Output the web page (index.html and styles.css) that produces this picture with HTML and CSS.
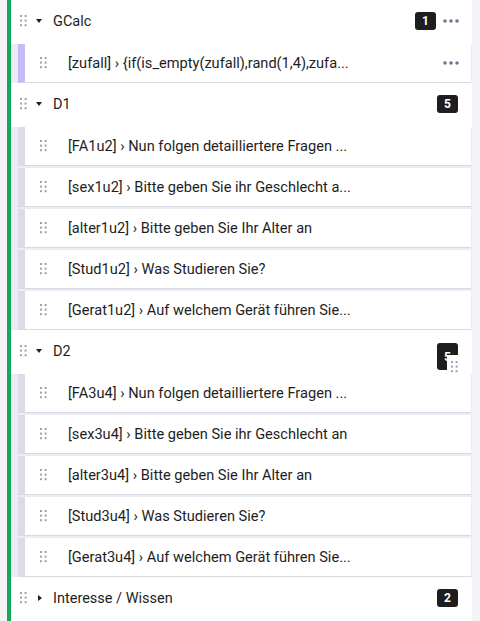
FILE: index.html
```html
<!DOCTYPE html>
<html lang="de">
<head>
<meta charset="utf-8">
<title>Fragenstruktur</title>
<link rel="stylesheet" href="styles.css">
</head>
<body>
<div class="tree">

  <div class="group">
    <div class="group-header">
      <span class="handle"><svg width="7" height="12" viewBox="0 0 7 12"><rect x="0" y="0" width="2" height="2"/><rect x="4.6" y="0" width="2" height="2"/><rect x="0" y="4.6" width="2" height="2"/><rect x="4.6" y="4.6" width="2" height="2"/><rect x="0" y="9.2" width="2" height="2"/><rect x="4.6" y="9.2" width="2" height="2"/></svg></span>
      <span class="caret"><span class="tri-down"></span></span>
      <span class="group-title">GCalc</span>
      <span class="badge">1</span>
      <span class="more"><svg width="16" height="4" viewBox="0 0 16 4"><circle cx="2" cy="2" r="1.8"/><circle cx="8" cy="2" r="1.8"/><circle cx="14" cy="2" r="1.8"/></svg></span>
    </div>
    <div class="group-body">
      <div class="question equation">
        <span class="handle"><svg width="7" height="12" viewBox="0 0 7 12"><rect x="0" y="0" width="2" height="2"/><rect x="4.6" y="0" width="2" height="2"/><rect x="0" y="4.6" width="2" height="2"/><rect x="4.6" y="4.6" width="2" height="2"/><rect x="0" y="9.2" width="2" height="2"/><rect x="4.6" y="9.2" width="2" height="2"/></svg></span>
        <span class="q-text">[zufall] › {if(is_empty(zufall),rand(1,4),zufa...</span>
        <span class="more"><svg width="16" height="4" viewBox="0 0 16 4"><circle cx="2" cy="2" r="1.8"/><circle cx="8" cy="2" r="1.8"/><circle cx="14" cy="2" r="1.8"/></svg></span>
      </div>
    </div>
  </div>

  <div class="group">
    <div class="group-header">
      <span class="handle"><svg width="7" height="12" viewBox="0 0 7 12"><rect x="0" y="0" width="2" height="2"/><rect x="4.6" y="0" width="2" height="2"/><rect x="0" y="4.6" width="2" height="2"/><rect x="4.6" y="4.6" width="2" height="2"/><rect x="0" y="9.2" width="2" height="2"/><rect x="4.6" y="9.2" width="2" height="2"/></svg></span>
      <span class="caret"><span class="tri-down"></span></span>
      <span class="group-title">D1</span>
      <span class="badge">5</span>
    </div>
    <div class="group-body">
      <div class="question">
        <span class="handle"><svg width="7" height="12" viewBox="0 0 7 12"><rect x="0" y="0" width="2" height="2"/><rect x="4.6" y="0" width="2" height="2"/><rect x="0" y="4.6" width="2" height="2"/><rect x="4.6" y="4.6" width="2" height="2"/><rect x="0" y="9.2" width="2" height="2"/><rect x="4.6" y="9.2" width="2" height="2"/></svg></span>
        <span class="q-text">[FA1u2] › Nun folgen detailliertere Fragen ...</span>
      </div>
      <div class="question">
        <span class="handle"><svg width="7" height="12" viewBox="0 0 7 12"><rect x="0" y="0" width="2" height="2"/><rect x="4.6" y="0" width="2" height="2"/><rect x="0" y="4.6" width="2" height="2"/><rect x="4.6" y="4.6" width="2" height="2"/><rect x="0" y="9.2" width="2" height="2"/><rect x="4.6" y="9.2" width="2" height="2"/></svg></span>
        <span class="q-text">[sex1u2] › Bitte geben Sie ihr Geschlecht a...</span>
      </div>
      <div class="question">
        <span class="handle"><svg width="7" height="12" viewBox="0 0 7 12"><rect x="0" y="0" width="2" height="2"/><rect x="4.6" y="0" width="2" height="2"/><rect x="0" y="4.6" width="2" height="2"/><rect x="4.6" y="4.6" width="2" height="2"/><rect x="0" y="9.2" width="2" height="2"/><rect x="4.6" y="9.2" width="2" height="2"/></svg></span>
        <span class="q-text">[alter1u2] › Bitte geben Sie Ihr Alter an</span>
      </div>
      <div class="question">
        <span class="handle"><svg width="7" height="12" viewBox="0 0 7 12"><rect x="0" y="0" width="2" height="2"/><rect x="4.6" y="0" width="2" height="2"/><rect x="0" y="4.6" width="2" height="2"/><rect x="4.6" y="4.6" width="2" height="2"/><rect x="0" y="9.2" width="2" height="2"/><rect x="4.6" y="9.2" width="2" height="2"/></svg></span>
        <span class="q-text">[Stud1u2] › Was Studieren Sie?</span>
      </div>
      <div class="question">
        <span class="handle"><svg width="7" height="12" viewBox="0 0 7 12"><rect x="0" y="0" width="2" height="2"/><rect x="4.6" y="0" width="2" height="2"/><rect x="0" y="4.6" width="2" height="2"/><rect x="4.6" y="4.6" width="2" height="2"/><rect x="0" y="9.2" width="2" height="2"/><rect x="4.6" y="9.2" width="2" height="2"/></svg></span>
        <span class="q-text">[Gerat1u2] › Auf welchem Gerät führen Sie...</span>
      </div>
    </div>
  </div>

  <div class="group">
    <div class="group-header">
      <span class="handle"><svg width="7" height="12" viewBox="0 0 7 12"><rect x="0" y="0" width="2" height="2"/><rect x="4.6" y="0" width="2" height="2"/><rect x="0" y="4.6" width="2" height="2"/><rect x="4.6" y="4.6" width="2" height="2"/><rect x="0" y="9.2" width="2" height="2"/><rect x="4.6" y="9.2" width="2" height="2"/></svg></span>
      <span class="caret"><span class="tri-down"></span></span>
      <span class="group-title">D2</span>
      <span class="badge badge-tall">5</span>
      <span class="drag-ghost"><span class="handle"><svg width="7" height="12" viewBox="0 0 7 12"><rect x="0" y="0" width="2" height="2"/><rect x="4.6" y="0" width="2" height="2"/><rect x="0" y="4.6" width="2" height="2"/><rect x="4.6" y="4.6" width="2" height="2"/><rect x="0" y="9.2" width="2" height="2"/><rect x="4.6" y="9.2" width="2" height="2"/></svg></span></span>
    </div>
    <div class="group-body">
      <div class="question">
        <span class="handle"><svg width="7" height="12" viewBox="0 0 7 12"><rect x="0" y="0" width="2" height="2"/><rect x="4.6" y="0" width="2" height="2"/><rect x="0" y="4.6" width="2" height="2"/><rect x="4.6" y="4.6" width="2" height="2"/><rect x="0" y="9.2" width="2" height="2"/><rect x="4.6" y="9.2" width="2" height="2"/></svg></span>
        <span class="q-text">[FA3u4] › Nun folgen detailliertere Fragen ...</span>
      </div>
      <div class="question">
        <span class="handle"><svg width="7" height="12" viewBox="0 0 7 12"><rect x="0" y="0" width="2" height="2"/><rect x="4.6" y="0" width="2" height="2"/><rect x="0" y="4.6" width="2" height="2"/><rect x="4.6" y="4.6" width="2" height="2"/><rect x="0" y="9.2" width="2" height="2"/><rect x="4.6" y="9.2" width="2" height="2"/></svg></span>
        <span class="q-text">[sex3u4] › Bitte geben Sie ihr Geschlecht an</span>
      </div>
      <div class="question">
        <span class="handle"><svg width="7" height="12" viewBox="0 0 7 12"><rect x="0" y="0" width="2" height="2"/><rect x="4.6" y="0" width="2" height="2"/><rect x="0" y="4.6" width="2" height="2"/><rect x="4.6" y="4.6" width="2" height="2"/><rect x="0" y="9.2" width="2" height="2"/><rect x="4.6" y="9.2" width="2" height="2"/></svg></span>
        <span class="q-text">[alter3u4] › Bitte geben Sie Ihr Alter an</span>
      </div>
      <div class="question">
        <span class="handle"><svg width="7" height="12" viewBox="0 0 7 12"><rect x="0" y="0" width="2" height="2"/><rect x="4.6" y="0" width="2" height="2"/><rect x="0" y="4.6" width="2" height="2"/><rect x="4.6" y="4.6" width="2" height="2"/><rect x="0" y="9.2" width="2" height="2"/><rect x="4.6" y="9.2" width="2" height="2"/></svg></span>
        <span class="q-text">[Stud3u4] › Was Studieren Sie?</span>
      </div>
      <div class="question">
        <span class="handle"><svg width="7" height="12" viewBox="0 0 7 12"><rect x="0" y="0" width="2" height="2"/><rect x="4.6" y="0" width="2" height="2"/><rect x="0" y="4.6" width="2" height="2"/><rect x="4.6" y="4.6" width="2" height="2"/><rect x="0" y="9.2" width="2" height="2"/><rect x="4.6" y="9.2" width="2" height="2"/></svg></span>
        <span class="q-text">[Gerat3u4] › Auf welchem Gerät führen Sie...</span>
      </div>
    </div>
  </div>

  <div class="group">
    <div class="group-header">
      <span class="handle"><svg width="7" height="12" viewBox="0 0 7 12"><rect x="0" y="0" width="2" height="2"/><rect x="4.6" y="0" width="2" height="2"/><rect x="0" y="4.6" width="2" height="2"/><rect x="4.6" y="4.6" width="2" height="2"/><rect x="0" y="9.2" width="2" height="2"/><rect x="4.6" y="9.2" width="2" height="2"/></svg></span>
      <span class="caret"><span class="tri-right"></span></span>
      <span class="group-title">Interesse / Wissen</span>
      <span class="badge">2</span>
    </div>
  </div>

</div>
</body>
</html>
```

FILE: styles.css
```css
html, body {
  margin: 0;
  padding: 0;
}

body {
  background: #f3f3f8;
  font-family: Roboto, "Liberation Sans", sans-serif;
  color: #1e1e1e;
  height: 621px;
  overflow: hidden;
}

.tree {
  margin-left: 7px;
  width: 461px;
  min-height: 621px;
  border-left: 4px solid #14a95a;
  background: #ffffff;
}

.group-header {
  position: relative;
  height: 42px;
  display: flex;
  align-items: center;
  padding: 0 13px 0 9px;
  background: #ffffff;
}

.handle {
  display: flex;
  width: 7px;
  height: 12px;
  flex: none;
}

.handle svg {
  fill: #9ea1b0;
  display: block;
}

.caret {
  width: 8px;
  margin-left: 8px;
  display: flex;
  align-items: center;
  justify-content: center;
  flex: none;
}

.tri-down {
  width: 0;
  height: 0;
  border-left: 3.5px solid transparent;
  border-right: 3.5px solid transparent;
  border-top: 4px solid #1e1e1e;
}

.tri-right {
  width: 0;
  height: 0;
  margin-left: 2px;
  border-top: 3px solid transparent;
  border-bottom: 3px solid transparent;
  border-left: 4px solid #1e1e1e;
}

.group-title {
  margin-left: 10px;
  font-size: 14.5px;
  flex: 1;
  white-space: nowrap;
}

.badge {
  width: 21px;
  height: 18px;
  border-radius: 3px;
  background: #1e1e1e;
  color: #ffffff;
  font-size: 12px;
  font-weight: 700;
  display: flex;
  align-items: center;
  justify-content: center;
  margin-right: 1px;
  flex: none;
}

.badge + .more {
  margin-left: 7px;
}

.group:first-child .badge {
  margin-right: 0;
}

.badge-tall {
  align-self: flex-start;
  margin-top: 13px;
  height: 27px;
}

.more {
  display: flex;
  width: 16px;
  height: 4px;
  flex: none;
}

.more svg {
  fill: #6c7898;
  display: block;
}

.drag-ghost {
  position: absolute;
  left: 436px;
  top: 25px;
  width: 15px;
  height: 20px;
  background: #ffffff;
  display: flex;
  justify-content: center;
  padding-top: 6px;
  box-sizing: border-box;
  z-index: 2;
}

.group-body {
  background: #ececf3;
  padding: 0 1px 0 7px;
}

.question {
  margin-top: 2px;
  height: 38px;
  display: flex;
  align-items: center;
  background: #ffffff;
  border-left: 7px solid #dcdce6;
  border-bottom: 1px solid #d8d8e2;
  padding: 0 12px 0 15px;
}

.question.equation {
  border-left-color: #c4bcf7;
}

.q-text {
  margin-left: 21px;
  font-size: 14.6px;
  flex: 1;
  white-space: nowrap;
  overflow: hidden;
}
```
